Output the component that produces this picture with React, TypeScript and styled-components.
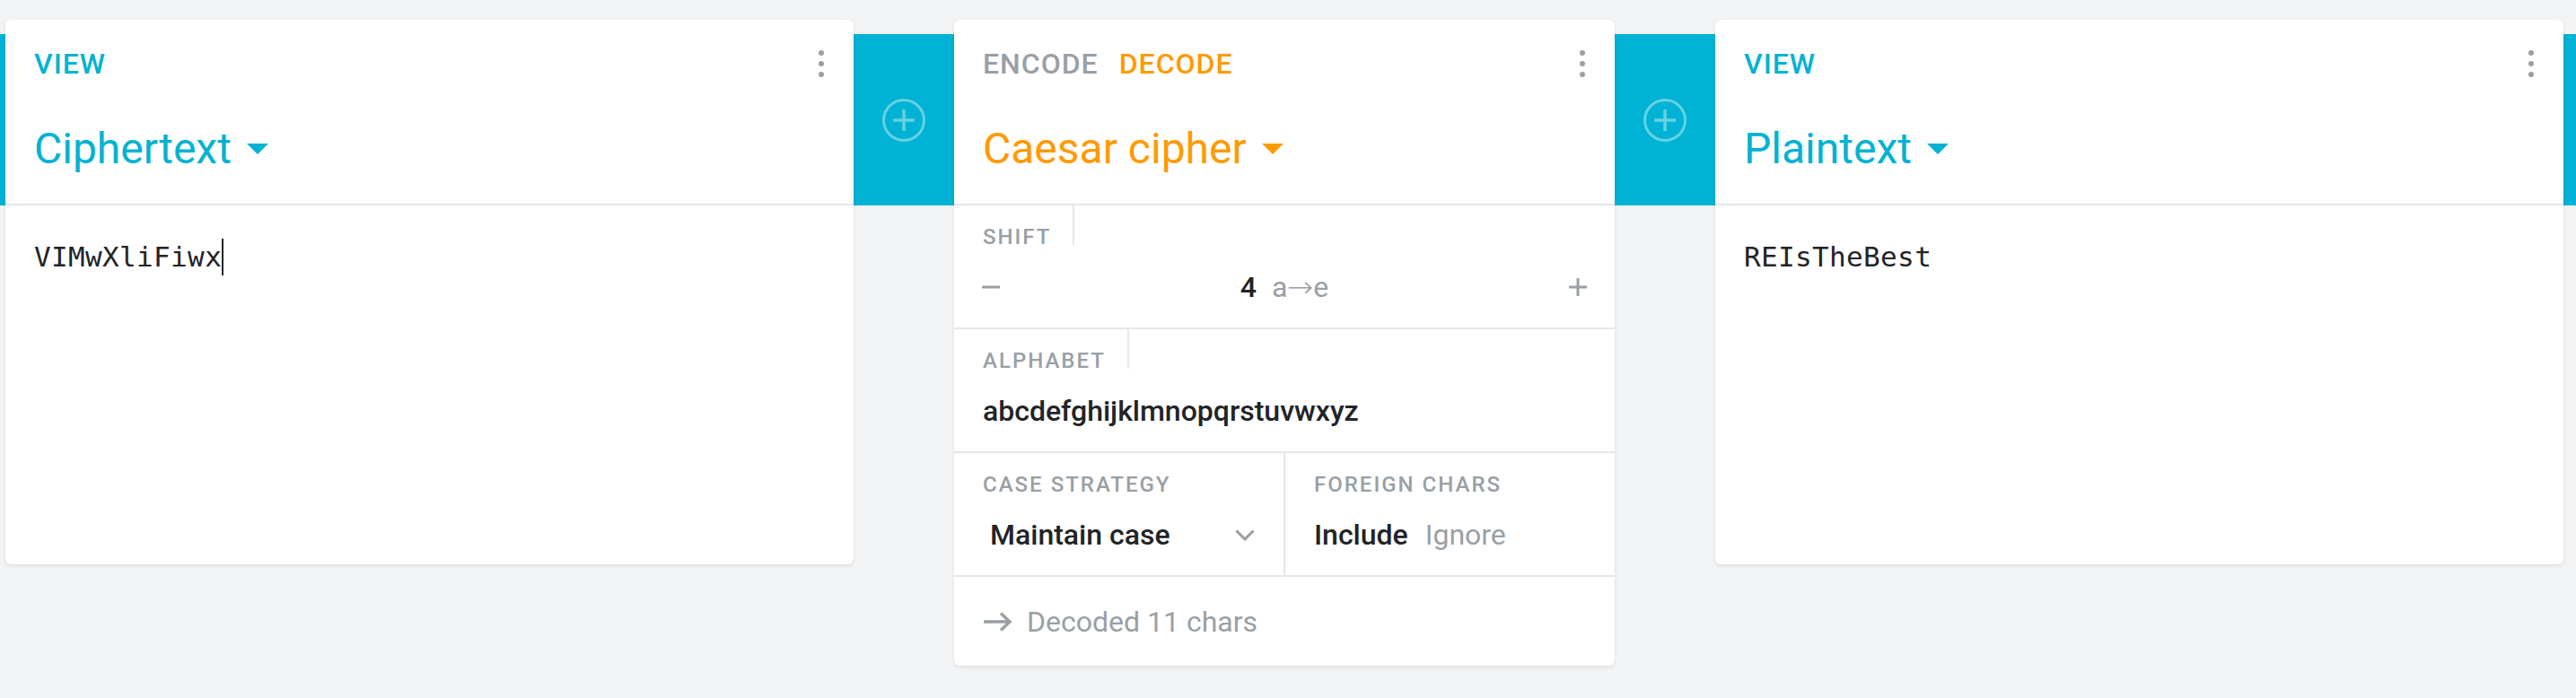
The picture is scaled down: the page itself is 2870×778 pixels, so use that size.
import React from "react";
import styled, { createGlobalStyle } from "styled-components";

const CYAN = "#00b2d3";
const ORANGE = "#ff9a00";
const GRAY = "#98a0a6";
const DARK = "#222427";
const LINE = "#e4e7ea";
const BG = "#f2f3f5";

const Global = createGlobalStyle`
  html, body { margin: 0; padding: 0; }
  body { background: ${BG}; font-family: Roboto, "Noto Sans", sans-serif; }
  * { box-sizing: border-box; }
`;

const Page = styled.div`
  min-height: 778px;
  padding: 22px 14px 0 6px;
  background: linear-gradient(
    to bottom,
    ${BG} 38px,
    ${CYAN} 38px,
    ${CYAN} 229px,
    ${BG} 229px
  );
`;

const Pipeline = styled.div`
  display: flex;
  align-items: flex-start;
`;

const Gap = styled.div`
  width: 112px;
  height: 191px;
  margin-top: 16px;
  flex-shrink: 0;
  display: flex;
  align-items: center;
  justify-content: center;
`;

const Brick = styled.section<{ $width: number }>`
  width: ${(p) => p.$width}px;
  flex-shrink: 0;
  background: #fff;
  border-radius: 6px;
  box-shadow: 0 2px 4px rgba(0, 0, 0, 0.08), 0 0 1px rgba(0, 0, 0, 0.06);
  overflow: hidden;
`;

const Header = styled.header`
  height: 207px;
  padding: 29px 32px 0 32px;
  border-bottom: 2px solid ${LINE};
`;

const TopRow = styled.div`
  display: flex;
  align-items: center;
  justify-content: space-between;
  height: 40px;
`;

const Modes = styled.div`
  display: flex;
  gap: 23px;
`;

const Mode = styled.span<{ $color: string }>`
  font-size: 32px;
  font-weight: 500;
  letter-spacing: 1px;
  line-height: 40px;
  text-transform: uppercase;
  color: ${(p) => p.$color};
`;

const MenuButton = styled.div`
  width: 8px;
  display: flex;
  flex-direction: column;
  align-items: center;
  gap: 6px;
  span {
    width: 6px;
    height: 6px;
    border-radius: 50%;
    background: ${GRAY};
  }
`;

const Title = styled.div<{ $color: string }>`
  margin-top: 47px;
  display: flex;
  align-items: center;
  gap: 17px;
  font-size: 48px;
  line-height: 56px;
  font-weight: 400;
  color: ${(p) => p.$color};
`;

const ViewerBody = styled.div`
  min-height: 400px;
  padding: 37px 32px;
`;

const MonoText = styled.div`
  font-family: "DejaVu Sans Mono", "Liberation Mono", monospace;
  font-size: 31px;
  letter-spacing: 0.35px;
  line-height: 41px;
  color: ${DARK};
  display: flex;
  align-items: flex-start;
`;

const Caret = styled.span`
  display: inline-block;
  width: 2px;
  height: 41px;
  background: ${DARK};
`;

const Field = styled.div<{ $divider?: boolean }>`
  padding: 0 32px 25px 32px;
  border-bottom: 2px solid ${LINE};
  border-right: ${(p) => (p.$divider ? `2px solid ${LINE}` : "none")};
`;

const FieldRow = styled.div`
  display: grid;
  grid-template-columns: 369px 1fr;
`;

const Label = styled.div<{ $bordered?: boolean }>`
  display: block;
  width: fit-content;
  height: 44px;
  padding-top: 26px;
  padding-right: 24px;
  font-size: 24px;
  line-height: 18px;
  font-weight: 500;
  letter-spacing: 2px;
  color: ${GRAY};
  text-transform: uppercase;
  white-space: nowrap;
  border-right: ${(p) => (p.$bordered ? `2px solid ${LINE}` : "none")};
`;

const Value = styled.div`
  margin-top: 27px;
  height: 40px;
  font-size: 32px;
  line-height: 40px;
  font-weight: 500;
  color: ${DARK};
  white-space: nowrap;
`;

const Stepper = styled.div`
  margin: 27px -3px 0 -3px;
  height: 40px;
  display: grid;
  grid-template-columns: 24px 1fr 24px;
  align-items: center;
`;

const StepValue = styled.div`
  display: flex;
  justify-content: center;
  align-items: baseline;
  gap: 17px;
  font-size: 32px;
  line-height: 40px;
`;

const Strong = styled.span`
  font-weight: 500;
  color: ${DARK};
`;

const Muted = styled.span`
  font-weight: 400;
  color: ${GRAY};
`;

const Arrow = styled.span`
  font-family: "DejaVu Sans", sans-serif;
  font-weight: 200;
  font-size: 32px;
  display: inline-block;
  transform: scaleX(1.1);
  margin: 0 1px;
`;

const Select = styled.div`
  margin-top: 27px;
  height: 40px;
  display: flex;
  align-items: center;
  justify-content: space-between;
  padding-left: 8px;
  font-size: 32px;
  line-height: 40px;
  font-weight: 500;
  color: ${DARK};
`;

const Choices = styled.div`
  margin-top: 27px;
  height: 40px;
  display: flex;
  gap: 19px;
  font-size: 32px;
  line-height: 40px;
`;

const Footer = styled.div`
  height: 99px;
  padding: 0 32px;
  display: flex;
  align-items: center;
  gap: 16px;
  font-size: 32px;
  color: ${GRAY};
`;

const DropCaret = ({ color }: { color: string }) => (
  <svg width="24" height="12" viewBox="0 0 24 12">
    <path d="M0 0 L24 0 L12 12 Z" fill={color} />
  </svg>
);

const Dots = () => (
  <MenuButton>
    <span />
    <span />
    <span />
  </MenuButton>
);

const AddIcon = () => (
  <svg width="50" height="50" viewBox="0 0 50 50">
    <circle cx="25" cy="25" r="22.5" fill="none" stroke="rgba(255,255,255,0.4)" strokeWidth="3" />
    <path d="M13 25 H37 M25 13 V37" stroke="rgba(255,255,255,0.4)" strokeWidth="3.5" />
  </svg>
);

const MinusIcon = () => (
  <svg width="24" height="24" viewBox="0 0 24 24">
    <path d="M2 12 H22" stroke={GRAY} strokeWidth="3" />
  </svg>
);

const PlusIcon = () => (
  <svg width="24" height="24" viewBox="0 0 24 24">
    <path d="M2 12 H22 M12 2 V22" stroke={GRAY} strokeWidth="3" />
  </svg>
);

const Chevron = () => (
  <svg width="22" height="13" viewBox="0 0 22 13">
    <path d="M1.5 1.5 L11 11 L20.5 1.5" fill="none" stroke={GRAY} strokeWidth="3" />
  </svg>
);

const ArrowRight = () => (
  <svg width="33" height="24" viewBox="0 0 33 24">
    <path d="M1 12 H30 M20 2.5 L30 12 L20 21.5" fill="none" stroke={GRAY} strokeWidth="3.5" />
  </svg>
);

const Viewer = ({ title, text, caret }: { title: string; text: string; caret?: boolean }) => (
  <Brick $width={945}>
    <Header>
      <TopRow>
        <Mode $color={CYAN}>View</Mode>
        <Dots />
      </TopRow>
      <Title $color={CYAN}>
        {title}
        <DropCaret color={CYAN} />
      </Title>
    </Header>
    <ViewerBody>
      <MonoText>
        {text}
        {caret && <Caret />}
      </MonoText>
    </ViewerBody>
  </Brick>
);

export default function App() {
  return (
    <>
      <Global />
      <Page>
        <Pipeline>
          <Viewer title="Ciphertext" text="VIMwXliFiwx" caret />
          <Gap>
            <AddIcon />
          </Gap>
          <Brick $width={736}>
            <Header>
              <TopRow>
                <Modes>
                  <Mode $color={GRAY}>Encode</Mode>
                  <Mode $color={ORANGE}>Decode</Mode>
                </Modes>
                <Dots />
              </TopRow>
              <Title $color={ORANGE}>
                Caesar cipher
                <DropCaret color={ORANGE} />
              </Title>
            </Header>
            <Field>
              <Label $bordered>Shift</Label>
              <Stepper>
                <MinusIcon />
                <StepValue>
                  <Strong>4</Strong>
                  <Muted>
                    a<Arrow>→</Arrow>e
                  </Muted>
                </StepValue>
                <PlusIcon />
              </Stepper>
            </Field>
            <Field>
              <Label $bordered>Alphabet</Label>
              <Value>abcdefghijklmnopqrstuvwxyz</Value>
            </Field>
            <FieldRow>
              <Field $divider>
                <Label>Case strategy</Label>
                <Select>
                  Maintain case
                  <Chevron />
                </Select>
              </Field>
              <Field>
                <Label>Foreign chars</Label>
                <Choices>
                  <Strong>Include</Strong>
                  <Muted>Ignore</Muted>
                </Choices>
              </Field>
            </FieldRow>
            <Footer>
              <ArrowRight />
              Decoded 11 chars
            </Footer>
          </Brick>
          <Gap>
            <AddIcon />
          </Gap>
          <Viewer title="Plaintext" text="REIsTheBest" />
        </Pipeline>
      </Page>
    </>
  );
}
